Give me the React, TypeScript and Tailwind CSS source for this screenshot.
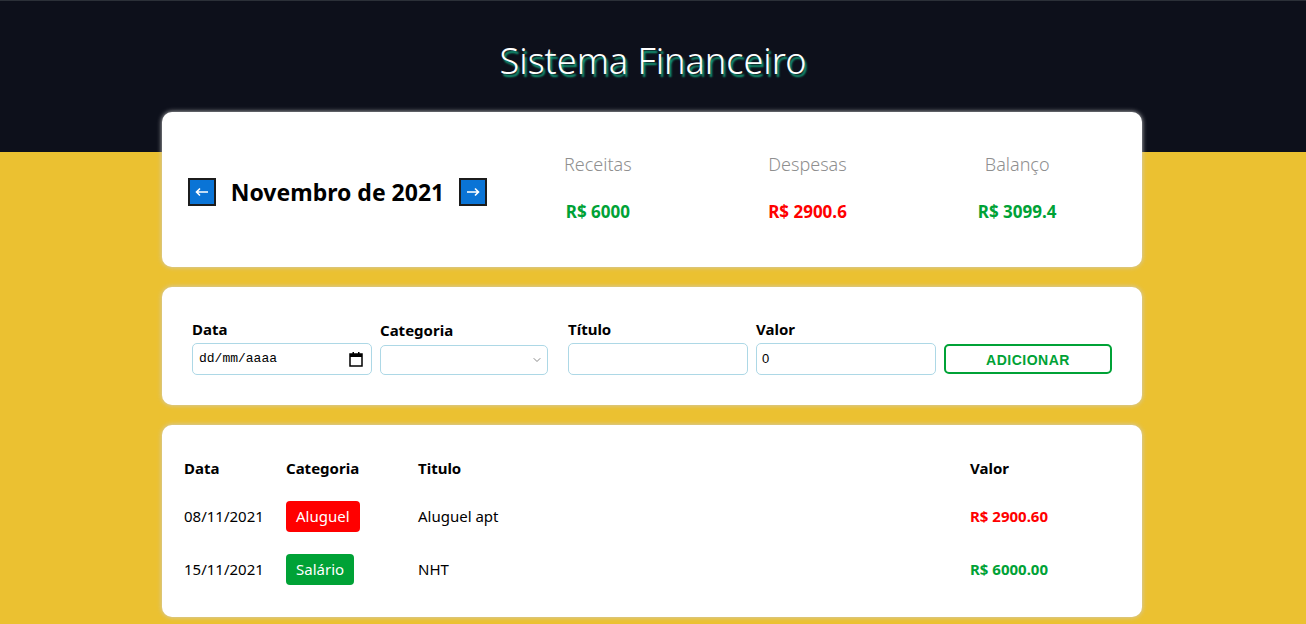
import { ChevronDown } from "lucide-react";

type Item = {
  date: string;
  category: string;
  title: string;
  value: number;
  expense: boolean;
};

const items: Item[] = [
  { date: "08/11/2021", category: "Aluguel", title: "Aluguel apt", value: 2900.6, expense: true },
  { date: "15/11/2021", category: "Salário", title: "NHT", value: 6000, expense: false },
];

const font = "font-['Noto_Sans',sans-serif]";

function ArrowButton({ dir }: { dir: "left" | "right" }) {
  return (
    <button
      type="button"
      className="flex h-[28px] w-[28px] items-center justify-center border-2 border-[#1c1c1c] bg-[#0a74d6] text-white"
    >
      <svg width="14" height="10" viewBox="0 0 14 10" fill="none" stroke="white" strokeWidth="1.6">
        {dir === "left" ? (
          <path d="M13 5H2M5 1.5L1.5 5L5 8.5" />
        ) : (
          <path d="M1 5H12M9 1.5L12.5 5L9 8.5" />
        )}
      </svg>
    </button>
  );
}

function InfoItem({ label, value, color }: { label: string; value: string; color: string }) {
  return (
    <div className="flex flex-1 flex-col items-center">
      <div className="text-[18px] font-light leading-[24px] text-[#8f8f8f]">{label}</div>
      <div className={`mt-[24px] text-[17px] font-bold leading-[24px] ${color}`}>{value}</div>
    </div>
  );
}

export default function App() {
  return (
    <div className={`min-h-screen bg-[#ebc131] ${font}`}>
      <header className="h-[152px] border-t border-[#2b3038] bg-[#0d101b] pt-[35px] text-center">
        <h1 className="text-[36px] font-light leading-[50px] text-white [text-shadow:2px_3px_2px_#13a57e]">
          Sistema Financeiro
        </h1>
      </header>

      <main className="mx-auto -mt-[40px] flex w-[980px] -translate-x-[1px] flex-col gap-[20px] pb-[8px]">
        <section className="flex h-[155px] items-center rounded-[10px] bg-white px-[20px] shadow-[0_0_5px_#cccccc]">
          <div className="flex w-[311px] items-center justify-center gap-[15px] pt-[4px]">
            <ArrowButton dir="left" />
            <div className="text-[23px] font-bold leading-[30px] text-black">Novembro de 2021</div>
            <ArrowButton dir="right" />
          </div>
          <div className="flex flex-1 -translate-y-[2px]">
            <InfoItem label="Receitas" value="R$ 6000" color="text-[#00a236]" />
            <InfoItem label="Despesas" value="R$ 2900.6" color="text-[#ff0000]" />
            <InfoItem label="Balanço" value="R$ 3099.4" color="text-[#00a236]" />
          </div>
        </section>

        <section className="flex h-[118px] items-center rounded-[10px] bg-white px-[30px] shadow-[0_0_5px_#cccccc]">
          <div className="grid grid-cols-[188px_188px_188px_188px_188px] items-end">
            <label className="flex flex-col">
              <span className="text-[15px] font-bold leading-[22px] text-black">Data</span>
              <div className="mt-[3px] flex h-[32px] w-[180px] items-center justify-between rounded-[5px] border border-[#add8e6] pl-[6px] pr-[8px]">
                <span className="font-['Liberation_Mono',monospace] text-[13px] text-black">dd/mm/aaaa</span>
                <svg width="14" height="16" viewBox="0 0 14 16">
                  <rect x="1" y="3" width="12" height="12" fill="none" stroke="black" strokeWidth="1.5" />
                  <rect x="1" y="3" width="12" height="3" fill="black" />
                  <rect x="3.5" y="1" width="1.5" height="3" fill="black" />
                  <rect x="9" y="1" width="1.5" height="3" fill="black" />
                </svg>
              </div>
            </label>
            <label className="flex flex-col">
              <span className="text-[15px] font-bold leading-[22px] text-black">Categoria</span>
              <div className="mt-[4px] flex h-[30px] w-[168px] items-center justify-end rounded-[5px] border border-[#add8e6] pr-[4px]">
                <ChevronDown size={12} strokeWidth={2} className="text-[#8a8a8a]" />
              </div>
            </label>
            <label className="flex flex-col">
              <span className="text-[15px] font-bold leading-[22px] text-black">Título</span>
              <div className="mt-[3px] h-[32px] w-[180px] rounded-[5px] border border-[#add8e6]" />
            </label>
            <label className="flex flex-col">
              <span className="text-[15px] font-bold leading-[22px] text-black">Valor</span>
              <div className="mt-[3px] flex h-[32px] w-[180px] items-center rounded-[5px] border border-[#add8e6] pl-[5px] font-['Liberation_Sans',sans-serif] text-[13px] text-black">
                0
              </div>
            </label>
            <button
              type="button"
              className="mb-[1px] h-[30px] w-[168px] rounded-[5px] border-2 border-[#00a236] bg-white pt-[3px] font-['Liberation_Sans',sans-serif] text-[14px] font-bold tracking-[0.5px] text-[#00a236]"
            >
              ADICIONAR
            </button>
          </div>
        </section>

        <section className="rounded-[10px] bg-white px-[22px] pb-[30px] pt-[30px] shadow-[0_0_5px_#cccccc]">
          <table className="w-full border-collapse text-left text-[15px] text-black">
            <thead>
              <tr className="h-[26px]">
                <th className="w-[102px] font-bold">Data</th>
                <th className="w-[132px] font-bold">Categoria</th>
                <th className="font-bold">Titulo</th>
                <th className="w-[150px] font-bold">Valor</th>
              </tr>
            </thead>
            <tbody>
              {items.map((item) => (
                <tr key={item.date} className="h-[53px]">
                  <td className="pt-[18px]">{item.date}</td>
                  <td className="pt-[18px]">
                    <span
                      className={`inline-block rounded-[4px] px-[10px] py-[4px] leading-[23px] text-white ${
                        item.expense ? "bg-[#ff0000]" : "bg-[#00a236]"
                      }`}
                    >
                      {item.category}
                    </span>
                  </td>
                  <td className="pt-[18px]">{item.title}</td>
                  <td
                    className={`pt-[18px] font-bold ${item.expense ? "text-[#ff0000]" : "text-[#00a236]"}`}
                  >
                    R$ {item.value.toFixed(2)}
                  </td>
                </tr>
              ))}
            </tbody>
          </table>
        </section>
      </main>
    </div>
  );
}
